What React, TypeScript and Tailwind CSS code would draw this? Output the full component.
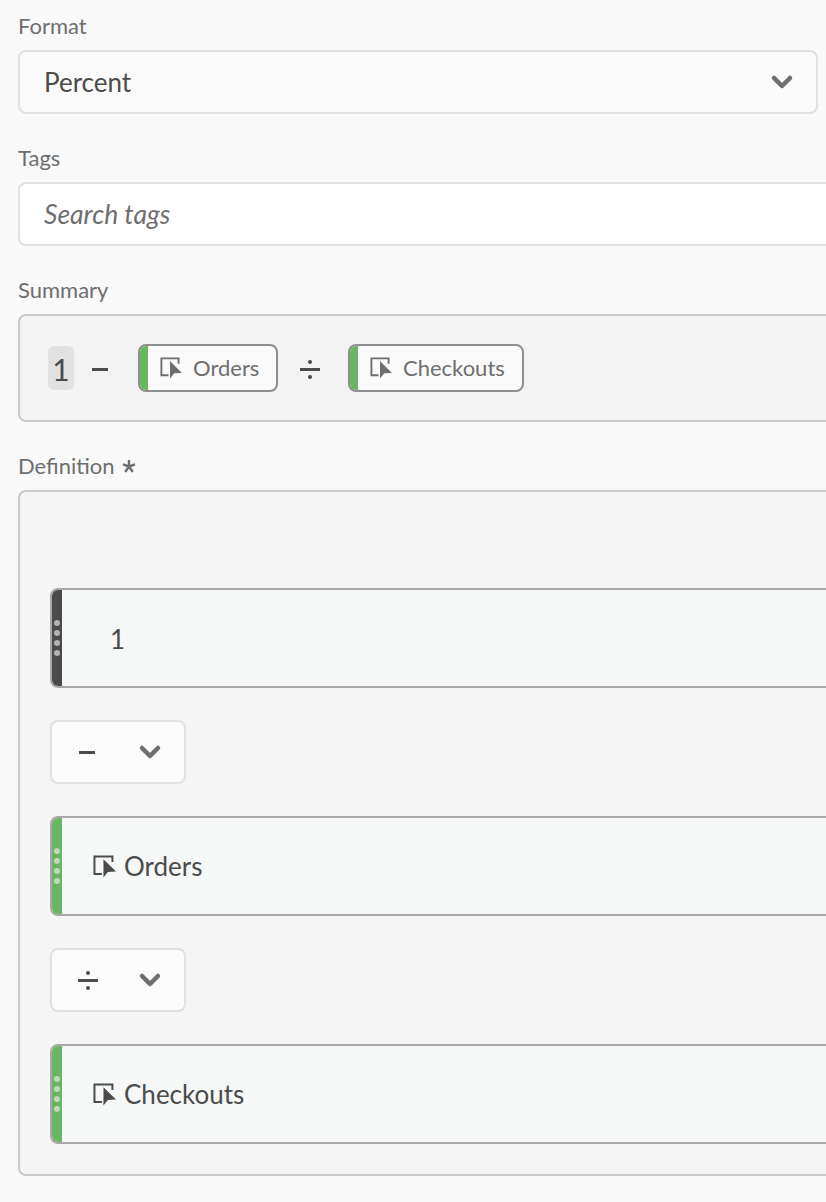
import { ChevronDown } from 'lucide-react'

function MetricIcon({ className }: { className: string }) {
  return (
    <svg viewBox="0 0 22 22" className={className} fill="none">
      <path d="M8.5 18.2H1.4V1.4h17.2v5.4" stroke="currentColor" strokeWidth="1.9" />
      <path d="M10 4v17.5l4.2-5.2 7.8-.4z" fill="currentColor" />
    </svg>
  )
}

function RequiredMark() {
  return (
    <svg viewBox="0 0 14 14" className="ml-[7px] h-[14px] w-[14px] text-[#6e6e6e]" fill="none" stroke="currentColor" strokeWidth="2.4">
      <path d="M7 1v6.5M1 5.4l6 2.1M13 5.4l-6 2.1M3.2 13 7 7.5l3.8 5.5" />
    </svg>
  )
}

function Chevron() {
  return <ChevronDown className="h-8 w-8 text-[#6e6e6e]" strokeWidth={3.4} />
}

function Label({ children }: { children: React.ReactNode }) {
  return <div className="flex h-[24px] items-center text-[22px] leading-[24px] text-[#6e6e6e]">{children}</div>
}

function SummaryChip({ name, width }: { name: string; width: string }) {
  return (
    <div className={`flex h-12 ${width} items-center overflow-hidden rounded-lg border-2 border-[#8e8e8e] bg-[#fafafa]`}>
      <div className="h-full w-2 bg-[#68b662]" />
      <MetricIcon className="ml-[12px] h-[22px] w-[22px] text-[#6e6e6e]" />
      <span className="ml-[11px] pb-[2px] text-[22px] text-[#6e6e6e]">{name}</span>
    </div>
  )
}

function DragBar({ dark }: { dark?: boolean }) {
  return (
    <div className={`flex w-[10px] flex-col items-center gap-1 pt-[30px] ${dark ? 'bg-[#4b4b4b]' : 'bg-[#68b662]'}`}>
      {[0, 1, 2, 3].map((i) => (
        <span key={i} className={`h-[6px] w-[6px] rounded-full ${dark ? 'bg-[#b3b3b3]' : 'bg-[#b9deb6]'}`} />
      ))}
    </div>
  )
}

function DefinitionRow({ dark, children }: { dark?: boolean; children: React.ReactNode }) {
  return (
    <div className="flex h-[100px] w-[900px] overflow-hidden rounded-l-lg border-2 border-[#a8a8a8] bg-[#f6f8f8]">
      <DragBar dark={dark} />
      <div className="flex items-center text-[26px] text-[#4b4b4b]">{children}</div>
    </div>
  )
}

function OperatorSelect({ children }: { children: React.ReactNode }) {
  return (
    <div className="flex h-16 w-[136px] items-center justify-between rounded-lg border-2 border-[#e1e1e1] bg-[#fbfbfb] pl-[26px] pr-[18px]">
      {children}
      <Chevron />
    </div>
  )
}

function Minus({ className }: { className: string }) {
  return <div className={`h-[3px] bg-[#4b4b4b] ${className}`} />
}

function Divide({ className }: { className: string }) {
  return (
    <div className={`flex flex-col items-center gap-[4px] ${className}`}>
      <span className="h-[4px] w-[4px] rounded-full bg-[#4b4b4b]" />
      <span className="h-[3px] w-full bg-[#4b4b4b]" />
      <span className="h-[4px] w-[4px] rounded-full bg-[#4b4b4b]" />
    </div>
  )
}

export default function App() {
  return (
    <div className="h-[1202px] w-[826px] overflow-hidden bg-[#f9f9f9] pl-[18px] pt-[14px] font-['Lato',sans-serif]">
      <Label>Format</Label>
      <div className="mt-3 flex h-16 w-[800px] items-center justify-between rounded-lg border-2 border-[#e1e1e1] bg-[#fafafa] pl-6 pr-[18px] text-[26px] text-[#4b4b4b]">
        Percent
        <Chevron />
      </div>

      <div className="mt-[32px]">
        <Label>Tags</Label>
      </div>
      <div className="mt-3 flex h-16 w-[900px] items-center rounded-lg border-2 border-[#e1e1e1] bg-white pl-6 pt-[2px] text-[26.5px] italic text-[#6e6e6e]">
        Search tags
      </div>

      <div className="mt-[32px]">
        <Label>Summary</Label>
      </div>
      <div className="mt-3 flex h-[108px] w-[900px] items-center rounded-lg border-2 border-[#cacaca] bg-[#f3f3f3] pl-[28px]">
        <div className="flex h-11 w-[26px] items-center justify-center rounded-md bg-[#e1e1e1] pt-[3px] text-[30px] text-[#4b4b4b]">1</div>
        <Minus className="ml-[18px] mt-[2px] w-4" />
        <div className="ml-[30px]">
          <SummaryChip name="Orders" width="w-[140px]" />
        </div>
        <Divide className="ml-[22px] mt-[2px] w-5" />
        <div className="ml-[28px]">
          <SummaryChip name="Checkouts" width="w-[176px]" />
        </div>
      </div>

      <div className="mt-[32px]">
        <Label>
          Definition
          <RequiredMark />
        </Label>
      </div>
      <div className="mt-3 flex h-[686px] w-[900px] flex-col gap-8 rounded-lg border-2 border-[#cacaca] bg-[#f5f5f5] pl-[30px] pt-[96px]">
        <DefinitionRow dark>
          <span className="ml-[48px] pt-[2px]">1</span>
        </DefinitionRow>
        <OperatorSelect>
          <Minus className="ml-px w-4" />
        </OperatorSelect>
        <DefinitionRow>
          <MetricIcon className="ml-[31px] h-[23px] w-[23px]" />
          <span className="ml-2">Orders</span>
        </DefinitionRow>
        <OperatorSelect>
          <Divide className="w-5" />
        </OperatorSelect>
        <DefinitionRow>
          <MetricIcon className="ml-[31px] h-[23px] w-[23px]" />
          <span className="ml-2">Checkouts</span>
        </DefinitionRow>
      </div>
    </div>
  )
}
